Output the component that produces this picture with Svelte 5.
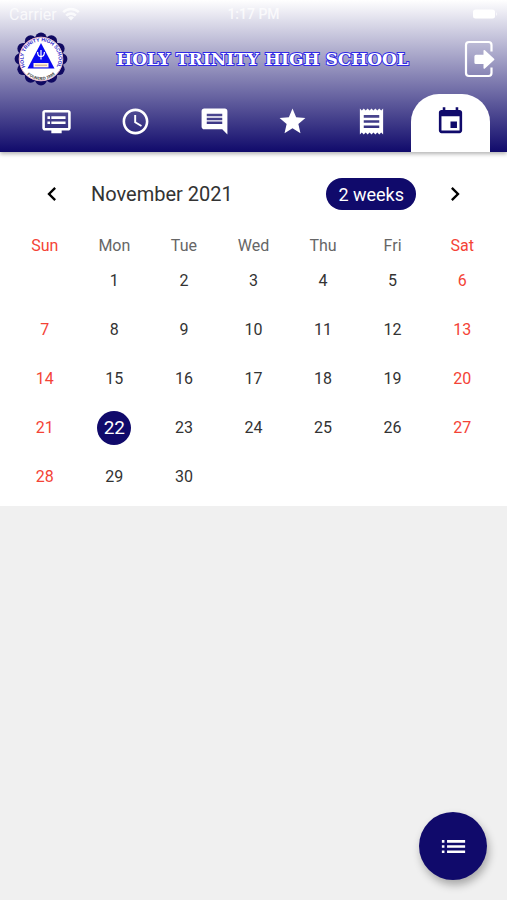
<script>
    const tabs = [
        {
            name: "Announcements",
            path: "M21 3H3c-1.1 0-2 .9-2 2v12c0 1.1.9 2 2 2h5v2h8v-2h5c1.1 0 1.99-.9 1.99-2L23 5c0-1.1-.9-2-2-2zm0 14H3V5h18v12zm-2-9H8v2h11V8zm0 4H8v2h11v-2zM7 8H5v2h2V8zm0 4H5v2h2v-2z",
        },
        {
            name: "Attendance",
            path: "M11.99 2C6.47 2 2 6.48 2 12s4.47 10 9.99 10C17.52 22 22 17.52 22 12S17.52 2 11.99 2zM12 20c-4.42 0-8-3.58-8-8s3.58-8 8-8 8 3.58 8 8-3.58 8-8 8zm.5-13H11v6l5.25 3.15.75-1.23-4.5-2.67z",
        },
        {
            name: "Messages",
            path: "M21.99 4c0-1.1-.89-2-1.99-2H4c-1.1 0-2 .9-2 2v12c0 1.1.9 2 2 2h14l4 4-.01-18zM18 14H6v-2h12v2zm0-3H6V9h12v2zm0-3H6V6h12v2z",
        },
        {
            name: "Grades",
            path: "M12 17.27L18.18 21l-1.64-7.03L22 9.24l-7.19-.61L12 2 9.19 8.63 2 9.24l5.46 4.73L5.82 21z",
        },
        {
            name: "Billing",
            path: "M18 17H6v-2h12v2zm0-4H6v-2h12v2zm0-4H6V7h12v2zM3 22l1.5-1.5L6 22l1.5-1.5L9 22l1.5-1.5L12 22l1.5-1.5L15 22l1.5-1.5L18 22l1.5-1.5L21 22V2l-1.5 1.5L18 2l-1.5 1.5L15 2l-1.5 1.5L12 2l-1.5 1.5L9 2 7.5 3.5 6 2 4.5 3.5 3 2v20z",
        },
        {
            name: "Calendar",
            path: "M17 12h-5v5h5v-5zM16 1v2H8V1H6v2H5c-1.11 0-1.99.9-1.99 2L3 19c0 1.1.89 2 2 2h14c1.1 0 2-.9 2-2V5c0-1.1-.9-2-2-2h-1V1h-2zm3 18H5V8h14v11z",
        },
    ];

    const weekdays = ["Sun", "Mon", "Tue", "Wed", "Thu", "Fri", "Sat"];
    const firstDay = 1;
    const daysInMonth = 30;

    const weeks = [];
    for (let start = 1 - firstDay; start <= daysInMonth; start += 7) {
        weeks.push(
            weekdays.map((_, i) => {
                const day = start + i;
                return day >= 1 && day <= daysInMonth ? day : null;
            }),
        );
    }

    // scalloped edge of the school seal
    const lobes = Array.from({ length: 12 }, (_, i) => {
        const angle = (i * Math.PI) / 6;
        return { x: 30 + 20.6 * Math.sin(angle), y: 30 - 20.6 * Math.cos(angle) };
    });

    let activeTab = $state("Calendar");
    let selected = $state(22);
</script>

<div class="screen">
    <header class="app-header">
        <div class="status-bar">
            <div class="carrier">
                <span>Carrier</span>
                <svg width="18" height="14" viewBox="0 0 18 14" aria-hidden="true">
                    <g fill="none" stroke="currentColor" stroke-width="2.6">
                        <path d="M1.2 5.2a11 11 0 0 1 15.6 0" />
                        <path d="M4.2 8.6a6.8 6.8 0 0 1 9.6 0" />
                    </g>
                    <path d="M9 13.6L6 10.6a4.2 4.2 0 0 1 6 0z" fill="currentColor" />
                </svg>
            </div>
            <span class="clock">1:17 PM</span>
            <div class="battery-wrap">
                <svg width="25" height="10" viewBox="0 0 25 10" aria-hidden="true">
                    <rect x="0" y="0.5" width="22" height="9" rx="2.5" fill="currentColor" />
                    <path d="M23 3.2c1.6.4 1.6 3.2 0 3.6z" fill="currentColor" opacity=".6" />
                </svg>
            </div>
        </div>

        <div class="brand">
            <svg class="seal" viewBox="0 0 60 60" aria-hidden="true">
                <g fill="#100a62">
                    {#each lobes as lobe}
                        <circle cx={lobe.x} cy={lobe.y} r="5.8" />
                    {/each}
                    <circle cx="30" cy="30" r="23" />
                </g>
                <circle cx="30" cy="30" r="21.8" fill="#fff" stroke="#e3b4c8" stroke-width="1" />
                <path id="seal-top" d="M15.7 40a17.5 17.5 0 1 1 28.6 0" fill="none" />
                <path id="seal-bottom" d="M13 41.9a20.8 20.8 0 0 0 34 0" fill="none" />
                <text class="seal-text top">
                    <textPath href="#seal-top" startOffset="50%">HOLY TRINITY HIGH SCHOOL</textPath>
                </text>
                <text class="seal-text bottom">
                    <textPath href="#seal-bottom" startOffset="50%">FOUNDED 1998</textPath>
                </text>
                <path d="M30 14L43.5 39.5h-27z" fill="#0808f0" />
                <path
                    d="M30 21v9.5M26.6 23c0 3.4 1.2 4.6 3.4 4.6s3.4-1.2 3.4-4.6"
                    fill="none"
                    stroke="#fff"
                    stroke-width="1.2"
                />
                <rect x="22.5" y="34" width="15" height="4.4" fill="#fff1e0" />
                <path d="M24 36.2h12" stroke="#c9a27c" stroke-width="1" />
            </svg>
            <h1>HOLY TRINITY HIGH SCHOOL</h1>
            <button class="logout" aria-label="Log out">
                <svg width="32" height="38" viewBox="0 0 32 38" aria-hidden="true">
                    <path
                        d="M27.5 11.5V5a3 3 0 0 0-3-3H5a3 3 0 0 0-3 3v28a3 3 0 0 0 3 3h19.5a3 3 0 0 0 3-3v-5.5"
                        fill="none"
                        stroke="currentColor"
                        stroke-width="2.2"
                    />
                    <path
                        d="M12 14.8h7.5v-4a.8.8 0 0 1 1.4-.5l9.2 8.4a1 1 0 0 1 0 1.4l-9.2 8.4a.8.8 0 0 1-1.4-.5V24H12a1.6 1.6 0 0 1-1.6-1.6v-6A1.6 1.6 0 0 1 12 14.8z"
                        fill="currentColor"
                    />
                </svg>
            </button>
        </div>

        <nav class="tabs">
            {#each tabs as tab}
                <button
                    class="tab"
                    class:active={activeTab === tab.name}
                    aria-label={tab.name}
                    onclick={() => (activeTab = tab.name)}
                >
                    <svg width="31" height="31" viewBox="0 0 24 24" aria-hidden="true">
                        <path d={tab.path} fill="currentColor" />
                    </svg>
                </button>
            {/each}
        </nav>
    </header>

    <main class="calendar">
        <div class="month-bar">
            <button class="arrow" aria-label="Previous month">
                <svg width="28" height="28" viewBox="0 0 24 24" aria-hidden="true">
                    <path d="M15.41 7.41L14 6l-6 6 6 6 1.41-1.41L10.83 12z" />
                </svg>
            </button>
            <h2>November 2021</h2>
            <button class="format">2 weeks</button>
            <button class="arrow" aria-label="Next month">
                <svg width="28" height="28" viewBox="0 0 24 24" aria-hidden="true">
                    <path d="M10 6L8.59 7.41 13.17 12l-4.58 4.59L10 18l6-6z" />
                </svg>
            </button>
        </div>

        <table>
            <thead>
                <tr>
                    {#each weekdays as name, i}
                        <th scope="col" class:weekend={i === 0 || i === 6}>{name}</th>
                    {/each}
                </tr>
            </thead>
            <tbody>
                {#each weeks as week}
                    <tr>
                        {#each week as day, i}
                            <td class:weekend={i === 0 || i === 6}>
                                {#if day}
                                    <button
                                        class="day"
                                        class:selected={day === selected}
                                        onclick={() => (selected = day)}>{day}</button
                                    >
                                {/if}
                            </td>
                        {/each}
                    </tr>
                {/each}
            </tbody>
        </table>
    </main>

    <button class="fab" aria-label="Show events">
        <svg width="31" height="31" viewBox="0 0 24 24" aria-hidden="true">
            <path
                d="M3 13h2v-2H3v2zm0 4h2v-2H3v2zm0-8h2V7H3v2zm4 4h14v-2H7v2zm0 4h14v-2H7v2zM7 7v2h14V7H7z"
                fill="currentColor"
            />
        </svg>
    </button>
</div>

<style>
    :global(body) {
        background: #f0f0f0;
    }

    .screen {
        min-height: 100vh;
        font-family: Roboto, "Liberation Sans", sans-serif;
        color: #333;
    }

    button {
        border: none;
        padding: 0;
        background: none;
        font-family: inherit;
        color: inherit;
        cursor: pointer;
    }

    svg {
        display: block;
    }

    .app-header {
        position: relative;
        color: #fff;
        background: linear-gradient(#fff, #100a6b);
        box-shadow: 0 2px 4px rgba(0, 0, 0, 0.3);
    }

    .status-bar {
        display: grid;
        grid-template-columns: 1fr auto 1fr;
        align-items: center;
        height: 28px;
        padding: 0 9px;
        font-size: 14px;
        color: rgba(255, 255, 255, 0.75);
    }

    .carrier {
        display: flex;
        align-items: center;
        gap: 5px;
        font-size: 16px;
    }

    .clock {
        font-weight: 500;
    }

    .battery-wrap {
        display: flex;
        justify-content: flex-end;
        color: #fff;
    }

    .brand {
        display: flex;
        align-items: center;
        height: 62px;
        padding: 0 11px;
    }

    .seal {
        width: 60px;
        height: 60px;
    }

    .seal-text {
        font-family: "Liberation Sans", sans-serif;
        font-weight: 700;
        text-anchor: middle;
    }

    .seal-text.top {
        font-size: 5px;
        fill: #2a22c8;
    }

    .seal-text.bottom {
        font-size: 4px;
        fill: #333;
    }

    h1 {
        flex: 1;
        margin: 0;
        padding-right: 10px;
        font-family: "DejaVu Serif", serif;
        font-size: 17px;
        font-weight: 700;
        text-align: center;
        white-space: nowrap;
        -webkit-text-stroke: 2px #3029e6;
        paint-order: stroke fill;
    }

    .tabs {
        display: flex;
        height: 58px;
        margin-top: 4px;
        padding: 0 17px;
    }

    .tab {
        flex: 1;
        display: flex;
        align-items: center;
        justify-content: center;
        padding-bottom: 3px;
    }

    .tab.active {
        background: #fff;
        color: #100a6b;
        border-radius: 28px 28px 0 0;
    }

    .calendar {
        padding: 18px 10px 5px;
        background: #fff;
    }

    .month-bar {
        display: flex;
        align-items: center;
        gap: 15px;
        height: 48px;
        padding: 0 18px;
    }

    .arrow {
        display: flex;
        align-items: center;
        justify-content: center;
        width: 48px;
        height: 48px;
        color: #000;
    }

    h2 {
        flex: 1;
        margin: 0;
        font-size: 20px;
        font-weight: 400;
    }

    .format {
        height: 32px;
        padding: 0 12px;
        border-radius: 16px;
        background: #100a6b;
        color: #fff;
        font-size: 18px;
    }

    table {
        width: 100%;
        margin-top: 16px;
        table-layout: fixed;
        border-collapse: collapse;
    }

    th,
    td {
        padding: 0;
        text-align: center;
    }

    th {
        height: 22px;
        font-size: 16px;
        font-weight: 400;
        color: #666;
    }

    td {
        height: 49px;
    }

    .day {
        width: 34px;
        height: 34px;
        border-radius: 50%;
        font-size: 16px;
    }

    .day.selected {
        background: #100a6b;
        color: #fff;
        font-size: 19px;
    }

    .weekend {
        color: #f44336;
    }

    .fab {
        position: fixed;
        right: 20px;
        bottom: 20px;
        display: flex;
        align-items: center;
        justify-content: center;
        width: 68px;
        height: 68px;
        border-radius: 50%;
        background: #100a6b;
        color: #fff;
        box-shadow: 2px 5px 8px rgba(0, 0, 0, 0.3);
    }
</style>
